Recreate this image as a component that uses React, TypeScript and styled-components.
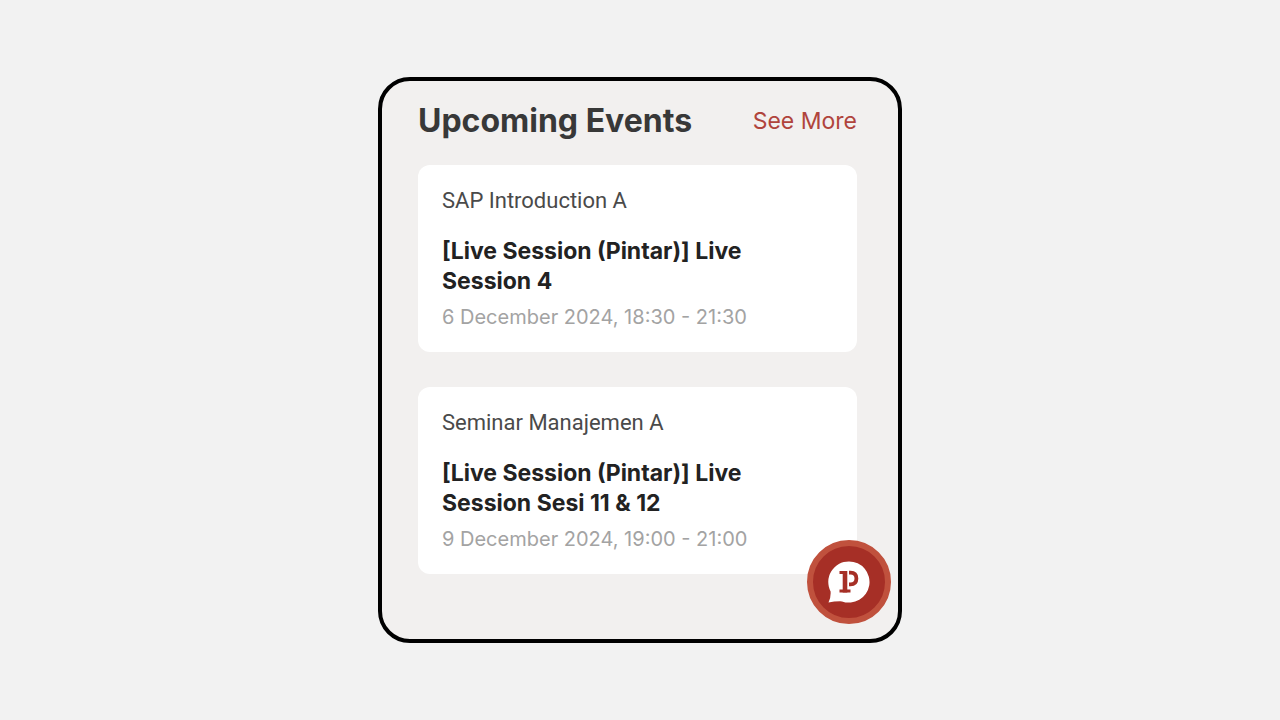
import React from 'react';
import styled, { createGlobalStyle } from 'styled-components';

const GlobalStyle = createGlobalStyle`
  *, *::before, *::after { box-sizing: border-box; }
  body {
    margin: 0;
    background: #f2f2f2;
    font-family: Inter, Roboto, "Liberation Sans", sans-serif;
  }
`;

const Page = styled.main`
  min-height: 100vh;
  display: flex;
  align-items: center;
  justify-content: center;
`;

const Panel = styled.section`
  position: relative;
  width: 100%;
  max-width: 524px;
  padding: 20px 41px 65px 36px;
  border: 4px solid #000;
  border-radius: 32px;
  background: #f2f0ef;
`;

const Header = styled.header`
  display: flex;
  align-items: center;
  justify-content: space-between;
  margin-bottom: 24px;
`;

const Heading = styled.h1`
  margin: 0;
  font-size: 32px;
  line-height: 40px;
  font-weight: 700;
  color: #383838;
`;

const MoreLink = styled.a`
  font-size: 23px;
  line-height: 40px;
  color: #b0443c;
  text-decoration: none;
`;

const EventList = styled.ul`
  display: flex;
  flex-direction: column;
  gap: 35px;
  margin: 0;
  padding: 0;
  list-style: none;
`;

const EventCard = styled.li`
  padding: 21px 24px 20px;
  border-radius: 12px;
  background: #fff;
`;

const Course = styled.p`
  margin: 0 0 20px;
  font-family: Roboto, "Liberation Sans", sans-serif;
  font-size: 22px;
  line-height: 30px;
  color: #4a4a4a;
`;

const EventTitle = styled.h2`
  margin: 0 0 6px;
  max-width: 340px;
  font-size: 23px;
  line-height: 30px;
  font-weight: 700;
  color: #222;
`;

const EventTime = styled.time`
  display: block;
  font-size: 20px;
  line-height: 30px;
  font-weight: 400;
  color: #a3a3a3;
`;

const ChatButton = styled.button`
  position: absolute;
  right: 7px;
  bottom: 15px;
  display: flex;
  align-items: center;
  justify-content: center;
  width: 84px;
  height: 84px;
  padding: 0;
  border: 6px solid #c0513d;
  border-radius: 50%;
  background: #a62f26;
  cursor: pointer;
`;

const events = [
  { course: 'SAP Introduction A', title: '[Live Session (Pintar)] Live Session 4', time: '6 December 2024, 18:30 - 21:30', date: '2024-12-06T18:30' },
  { course: 'Seminar Manajemen A', title: '[Live Session (Pintar)] Live Session Sesi 11 & 12', time: '9 December 2024, 19:00 - 21:00', date: '2024-12-09T19:00' },
];

function ChatLogo() {
  return (
    <svg width="42" height="42" viewBox="0 0 42 42" aria-hidden="true">
      <path d="M21 0.4A20.6 20.6 0 1 1 14 40.4Q7 40.2 0.5 41.5Q3 37 2.6 30.5A20.6 20.6 0 0 1 21 .4Z" fill="#fff" />
      <g fill="none" stroke="#a62f26">
        <path d="M11.5 11.5H19M11.5 30H22.5" strokeWidth="3" />
        <path d="M17 10V31.500" strokeWidth="4.600" />
        <path d="M21 11.700H22.500Q28.400 11.700 28.400 17.500Q28.400 23.300 22.500 23.300H21" strokeWidth="3.800" />
      </g>
    </svg>
  );
}

export default function App() {
  return (
    <>
      <GlobalStyle />
      <Page>
        <Panel aria-labelledby="events-heading">
          <Header>
            <Heading id="events-heading">Upcoming Events</Heading>
            <MoreLink href="#events">See More</MoreLink>
          </Header>
          <EventList>
            {events.map((event) => (
              <EventCard key={event.date}>
                <Course>{event.course}</Course>
                <EventTitle>{event.title}</EventTitle>
                <EventTime dateTime={event.date}>{event.time}</EventTime>
              </EventCard>
            ))}
          </EventList>
          <ChatButton type="button" aria-label="Open chat">
            <ChatLogo />
          </ChatButton>
        </Panel>
      </Page>
    </>
  );
}
